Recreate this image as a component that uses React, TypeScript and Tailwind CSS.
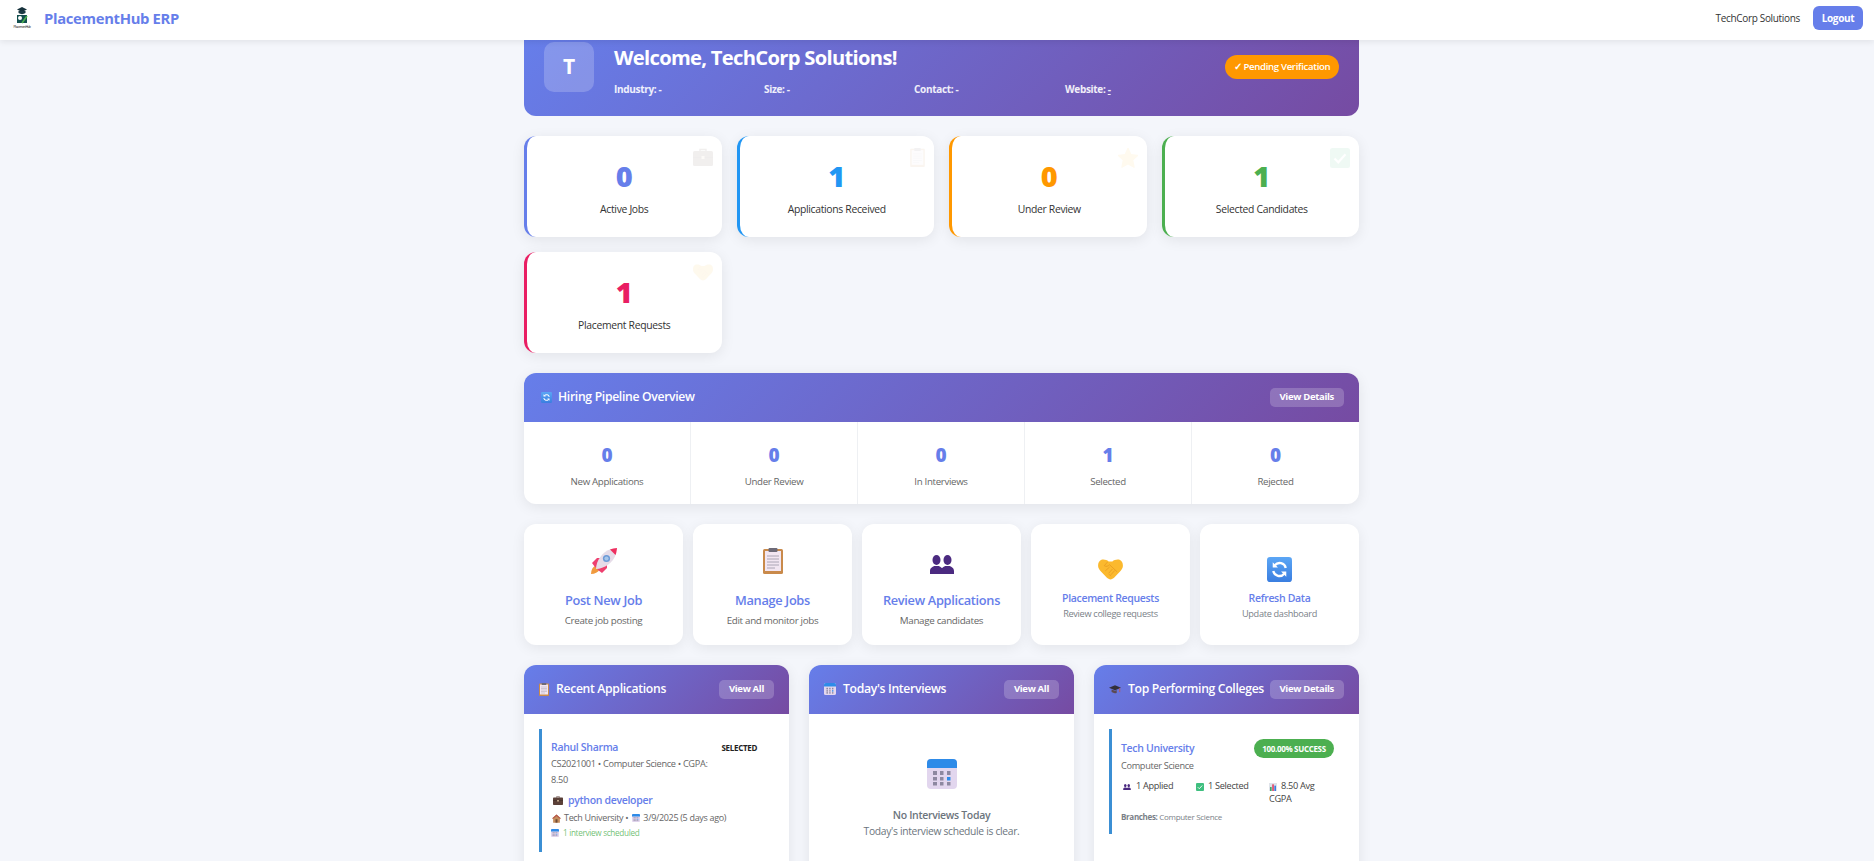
import React from "react";

const Briefcase = ({ className = "" }: { className?: string }) => (
  <svg viewBox="0 0 20 18" className={className}>
    <path d="M7 3V1.5h6V3" fill="none" stroke="#5b4038" strokeWidth="1.4" />
    <rect x="0" y="3" width="20" height="15" rx="1.5" fill="#5b4038" />
    <rect x="0" y="9" width="20" height="1" fill="#3d2a25" />
    <rect x="8.5" y="8" width="3" height="3" fill="#e5c9a8" />
  </svg>
);
const Clipboard = ({ className = "" }: { className?: string }) => (
  <svg viewBox="0 0 20 26" className={className}>
    <rect x="0" y="1" width="20" height="25" rx="1.5" fill="#c98a4b" />
    <rect x="2" y="3" width="16" height="20" fill="#f2e6f2" />
    <rect x="5.5" y="0" width="9" height="4" rx="1" fill="#6d6a78" />
    <path d="M4 8h12M4 11h12M4 14h12M4 17h12M4 20h8" stroke="#9a94a6" strokeWidth="0.8" />
  </svg>
);
const Star = ({ className = "" }: { className?: string }) => (
  <svg viewBox="0 0 20 20" className={className}>
    <path d="M10 0l3 6.6 7 .8-5.2 4.8 1.4 7.2L10 16l-6.2 3.4 1.4-7.2L0 7.4l7-.8z" fill="#ffc83d" stroke="#ffc83d" strokeWidth="1" strokeLinejoin="round" />
  </svg>
);
const CheckBox = ({ className = "" }: { className?: string }) => (
  <svg viewBox="0 0 20 20" className={className}>
    <rect width="20" height="20" rx="2.5" fill="#3fbf7f" />
    <path d="M4.5 10.5l3.8 3.8 7.2-8" fill="none" stroke="#fff" strokeWidth="2.2" />
  </svg>
);
const Handshake = ({ className = "" }: { className?: string }) => (
  <svg viewBox="0 0 26 22" className={className}>
    <path d="M3 1C1 2 0 4 0 7c0 2 1 4 3 6l6 6.500c2.500 2.500 5.500 2.500 8 0l6-6.500c2-2 3-4 3-6 0-3-1-5-3-6-3-1-6 0-8 1.500h-4C9 1 6 0 3 1z" fill="#fbb92e" />
    <path d="M10 3L6.500 7c2 1.500 4 .5 5.500-1l8 7.500M15 10.500l-4 4.500M17.500 12l-4 4.500M12 8.500l-4.500 4M13.500 18l-2-2" fill="none" stroke="#e6981f" strokeWidth="0.8" />
  </svg>
);
const Rocket = ({ className = "" }: { className?: string }) => (
  <svg viewBox="0 0 26 26" className={className}>
    <path d="M0 26c.2-4 1.500-7 4.500-8.500l4 4C7 24.500 4 25.800 0 26z" fill="#f09a3e" />
    <path d="M1 15l5-5 4.500 0L6.500 20.500 4 19z" fill="#ee3f6f" />
    <path d="M11 25l5-5 0-4.500L5.500 19.500 7 22z" fill="#ee3f6f" />
    <path d="M5 21C5 13 11.500 3.500 20 1l5 5C22.500 14.500 13 21 5 21z" fill="#e6dce8" />
    <path d="M19 1.500C21 .7 23.500 .2 26 0c-.2 2.500-.7 5-1.500 7z" fill="#ee2f5f" />
    <circle cx="15.500" cy="10.500" r="3.600" fill="#6c9ad6" />
    <circle cx="15.500" cy="10.500" r="2.100" fill="#a7c6ea" />
  </svg>
);
const People = ({ className = "" }: { className?: string }) => (
  <svg viewBox="0 0 24 19" className={className}>
    <g fill="#4b2a80">
      <ellipse cx="6.500" cy="5" rx="4" ry="5" />
      <path d="M0 19v-3c0-3 2.500-4 4-5h5c1.500 1 4 2 4 5v3z" />
      <ellipse cx="17.500" cy="5" rx="4" ry="5" />
      <path d="M11 19v-3c0-3 2.500-4 4-5h5c1.500 1 4 2 4 5v3z" />
    </g>
  </svg>
);
const Refresh = ({ className = "" }: { className?: string }) => (
  <svg viewBox="0 0 24 24" className={className}>
    <defs>
      <linearGradient id="rf" x1="0" y1="0" x2="0" y2="1">
        <stop offset="0" stopColor="#5ba6f5" />
        <stop offset="1" stopColor="#3a7ee0" />
      </linearGradient>
    </defs>
    <rect width="24" height="24" rx="3" fill="url(#rf)" />
    <path d="M18 10.500A6 6 0 0 0 7.500 8M6 13.500A6 6 0 0 0 16.500 16" fill="none" stroke="#fff" strokeWidth="2.200" />
    <path d="M5.500 5v5h5zM18.500 19v-5h-5z" fill="#fff" />
  </svg>
);
const Calendar = ({ className = "" }: { className?: string }) => (
  <svg viewBox="0 0 30 30" className={className}>
    <rect width="30" height="30" rx="4" fill="#e2d6ee" />
    <path d="M0 9V4a4 4 0 0 1 4-4h22a4 4 0 0 1 4 4v5z" fill="#2e8be8" />
    <g fill="#8d88a0">
      <rect x="6" y="12" width="4" height="4" />
      <rect x="13" y="12" width="3.500" height="4" />
      <rect x="20" y="12" width="3.500" height="4" />
      <rect x="6" y="18" width="4" height="3.500" />
      <rect x="13" y="18" width="3.500" height="3.500" />
      <rect x="6" y="23" width="4" height="3.500" />
      <rect x="13" y="23" width="3.500" height="3.500" />
      <rect x="20" y="23" width="3.500" height="3.500" />
    </g>
    <rect x="20" y="18" width="3.500" height="3.500" fill="#2e8be8" />
  </svg>
);
const GradCap = ({ className = "" }: { className?: string }) => (
  <svg viewBox="0 0 14 12" className={className}>
    <path d="M0 4l7-3 7 3-7 3z" fill="#33303a" />
    <path d="M3 6v3c2 1.500 4 1.500 6 1V6.500L7 7.500z" fill="#5c4a52" />
    <path d="M12.500 4.500V9" stroke="#c9553f" strokeWidth="1" />
  </svg>
);
const Chart = ({ className = "" }: { className?: string }) => (
  <svg viewBox="0 0 12 12" className={className}>
    <rect width="12" height="12" fill="#dfe3ea" />
    <rect x="1.500" y="6" width="2.500" height="6" fill="#3fa96a" />
    <rect x="4.800" y="2" width="2.500" height="10" fill="#e0476a" />
    <rect x="8" y="4" width="2.500" height="8" fill="#3a7ee0" />
  </svg>
);
const House = ({ className = "" }: { className?: string }) => (
  <svg viewBox="0 0 12 12" className={className}>
    <path d="M6 .5L0 6h1.500v5.500h9V6H12z" fill="#c58e5c" />
    <path d="M6 .5L0 6h2l4-3.500L10 6h2z" fill="#b5534a" />
    <rect x="4.700" y="7" width="2.600" height="4.500" fill="#6e4a36" />
  </svg>
);
const Logo = () => (
  <svg viewBox="0 0 24 22" className="w-6 h-[22px] shrink-0">
    <path d="M12 0l5 2.500-5 2.500-5-2.500z" fill="#16323c" />
    <path d="M8.500 4v2c2 1.500 5 1.500 7 0V4z" fill="#1c3a44" />
    <path d="M7 8h10v8H7z" fill="#14504f" />
    <circle cx="10" cy="11" r="2" fill="#fff" />
    <path d="M12 16l5-7" stroke="#4caf50" strokeWidth="1.600" />
    <text x="12" y="21" textAnchor="middle" fontSize="3.200" fontFamily="Liberation Sans" fill="#222">PlacementHub</text>
  </svg>
);

const StatCard = ({ n, label, numCls, borderCls, icon }: { n: string; label: string; numCls: string; borderCls: string; icon: React.ReactNode }) => (
  <div className={`relative h-[101px] rounded-[12px] border-l-[3px] bg-white flex flex-col items-center pt-[23px] shadow-[0_3px_14px_rgba(0,0,0,0.08)] ${borderCls}`}>
    <div className={`text-[29px] leading-[34px] font-black tracking-normal ${numCls}`}>{n}</div>
    <div className="mt-[9px] text-[10.4px] leading-[14px] text-[#333333]">{label}</div>
    <div className="absolute top-[12px] right-[9px] opacity-[0.08]">{icon}</div>
  </div>
);

const Pipe = ({ n, label, last }: { n: string; label: string; last?: boolean }) => (
  <div className={`flex flex-col items-center pt-[21px] ${last ? "" : "border-r border-[#eef0f3]"}`}>
    <div className="text-[19px] leading-[24px] font-black tracking-normal text-[#667eea]">{n}</div>
    <div className="mt-[8px] text-[9.7px] leading-[14px] text-[#666666]">{label}</div>
  </div>
);

const Action = ({ icon, title, sub, small }: { icon: React.ReactNode; title: string; sub: string; small?: boolean }) => (
  <div className={`h-[121px] rounded-[12px] bg-white flex flex-col items-center shadow-[0_3px_14px_rgba(0,0,0,0.07)] ${small ? "pt-[32px]" : "pt-[24px]"}`}>
    <div className={`h-[26px] flex items-center ${small ? "mb-[9px]" : "mb-[17px]"}`}>{icon}</div>
    {small ? (
      <>
        <div className="text-[10.5px] leading-[14px] font-semibold text-[#667eea]">{title}</div>
        <div className="mt-[2px] text-[9.2px] leading-[13px] text-[#7a7f88]">{sub}</div>
      </>
    ) : (
      <>
        <div className="text-[12.8px] leading-[18px] font-semibold text-[#667eea]">{title}</div>
        <div className="mt-[5px] text-[9.8px] leading-[14px] text-[#666666]">{sub}</div>
      </>
    )}
  </div>
);

const Btn = ({ children }: { children: React.ReactNode }) => (
  <div className="h-[19px] px-[10px] rounded-[5px] bg-white/20 text-[9.5px] font-bold text-white flex items-center whitespace-nowrap">{children}</div>
);

const PanelHead = ({ icon, title, btn }: { icon: React.ReactNode; title: string; btn: string }) => (
  <div className="h-[49px] rounded-t-[12px] px-[15px] flex items-center justify-between bg-[linear-gradient(135deg,#667eea_0%,#764ba2_100%)]">
    <div className="flex items-center gap-[7px] text-[12.2px] font-semibold text-white whitespace-nowrap">
      {icon}
      {title}
    </div>
    <Btn>{btn}</Btn>
  </div>
);

export default function App() {
  return (
    <div className="h-[861px] overflow-hidden bg-[#f4f6fb] tracking-[-0.02em] font-['Open_Sans','Noto_Sans',sans-serif]">
      <header className="relative z-10 h-10 bg-white flex items-center justify-between pl-[10px] pr-[11px] pb-[4px] shadow-[0_2px_6px_rgba(0,0,0,0.08)]">
        <div className="flex items-center gap-[10px]">
          <Logo />
          <div className="text-[14.8px] font-bold text-[#667eea] whitespace-nowrap">PlacementHub ERP</div>
        </div>
        <div className="flex items-center gap-[13px]">
          <div className="text-[10px] text-[#333333]">TechCorp Solutions</div>
          <div className="h-[24px] w-[50px] rounded-[6px] bg-[#667eea] text-white text-[10px] font-bold flex items-center justify-center">Logout</div>
        </div>
      </header>

      <main className="w-[835px] ml-[524px]">
        <section className="h-[76px] rounded-b-[12px] px-[20px] pt-[2px] flex items-start gap-[20px] bg-[linear-gradient(135deg,#667eea_0%,#764ba2_100%)]">
          <div className="w-[50px] h-[50px] rounded-[10px] bg-white/20 text-white text-[21px] font-bold flex items-center justify-center shrink-0">T</div>
          <div className="flex-1 min-w-0">
            <div className="text-[20.2px] leading-[28px] font-bold tracking-[-0.035em] text-white mt-[1px] whitespace-nowrap">Welcome, TechCorp Solutions!</div>
            <div className="grid grid-cols-[150px_150px_151px_150px] mt-[11px] text-[10px] leading-[14px] font-bold text-white/90">
              <div>Industry: -</div>
              <div>Size: -</div>
              <div>Contact: -</div>
              <div>Website: <span className="underline">-</span></div>
            </div>
          </div>
          <div className="mt-[13px] h-[24px] w-[114px] rounded-full bg-[#ff9800] text-white text-[9.6px] font-semibold flex items-center justify-center whitespace-nowrap">✓ Pending Verification</div>
        </section>

        <section className="grid grid-cols-4 gap-[15px] mt-[20px]">
          <StatCard n="0" label="Active Jobs" numCls="text-[#667eea]" borderCls="border-[#667eea]" icon={<Briefcase className="w-5 h-[18px]" />} />
          <StatCard n="1" label="Applications Received" numCls="text-[#2196f3]" borderCls="border-[#2196f3]" icon={<Clipboard className="w-[15px] h-[19px]" />} />
          <StatCard n="0" label="Under Review" numCls="text-[#ff9800]" borderCls="border-[#ff9800]" icon={<Star className="w-5 h-5" />} />
          <StatCard n="1" label="Selected Candidates" numCls="text-[#4caf50]" borderCls="border-[#4caf50]" icon={<CheckBox className="w-5 h-5" />} />
          <StatCard n="1" label="Placement Requests" numCls="text-[#e91e63]" borderCls="border-[#e91e63]" icon={<Handshake className="w-5 h-[17px]" />} />
        </section>

        <section className="mt-[20px] rounded-[12px] bg-white shadow-[0_3px_14px_rgba(0,0,0,0.08)]">
          <div className="h-[49px] rounded-t-[12px] pl-[17px] pr-[15px] flex items-center justify-between bg-[linear-gradient(135deg,#667eea_0%,#764ba2_100%)]">
            <div className="flex items-center gap-[6px] text-[12.2px] font-semibold text-white">
              <Refresh className="w-[11px] h-[11px]" />
              Hiring Pipeline Overview
            </div>
            <Btn>View Details</Btn>
          </div>
          <div className="grid grid-cols-5 h-[82px]">
            <Pipe n="0" label="New Applications" />
            <Pipe n="0" label="Under Review" />
            <Pipe n="0" label="In Interviews" />
            <Pipe n="1" label="Selected" />
            <Pipe n="0" label="Rejected" last />
          </div>
        </section>

        <section className="grid grid-cols-5 gap-[10px] mt-[20px]">
          <Action icon={<Rocket className="w-[26px] h-[26px]" />} title="Post New Job" sub="Create job posting" />
          <Action icon={<Clipboard className="w-[20px] h-[26px]" />} title="Manage Jobs" sub="Edit and monitor jobs" />
          <Action icon={<People className="w-[24px] h-[19px] self-end" />} title="Review Applications" sub="Manage candidates" />
          <Action small icon={<Handshake className="w-[25px] h-[21px]" />} title="Placement Requests" sub="Review college requests" />
          <Action small icon={<Refresh className="w-[25px] h-[25px]" />} title="Refresh Data" sub="Update dashboard" />
        </section>

        <section className="grid grid-cols-3 gap-[20px] mt-[20px]">
          <div className="h-[300px] rounded-[12px] bg-white shadow-[0_3px_14px_rgba(0,0,0,0.08)]">
            <PanelHead icon={<Clipboard className="w-[10px] h-[13px]" />} title="Recent Applications" btn="View All" />
            <div className="ml-[15px] mt-[15px] mr-[15px] h-[123px] border-l-[3px] border-[#3b8fd4] pl-[9px] pt-[11px]">
              <div className="flex justify-between pr-[17px]">
                <div className="text-[10.5px] leading-[15px] font-semibold text-[#667eea]">Rahul Sharma</div>
                <div className="text-[8px] leading-[15px] font-bold text-[#222222]">SELECTED</div>
              </div>
              <div className="mt-[1px] w-[165px] text-[9.2px] leading-[16px] text-[#666666]">CS2021001 • Computer Science • CGPA: 8.50</div>
              <div className="mt-[5px] ml-[2px] flex items-center gap-[5px] text-[10.5px] leading-[15px] font-semibold text-[#667eea]">
                <Briefcase className="w-[10px] h-[9px]" />
                python developer
              </div>
              <div className="mt-[3px] flex items-center gap-[3px] text-[9px] leading-[14px] text-[#666666] whitespace-nowrap">
                <House className="w-[9px] h-[9px] ml-[1px]" />
                Tech University •
                <Calendar className="w-[8px] h-[8px] ml-[1px]" />
                3/9/2025 (5 days ago)
              </div>
              <div className="mt-[1px] flex items-center gap-[4px] text-[8.2px] leading-[14px] text-[#4caf50]/80">
                <Calendar className="w-[8px] h-[8px]" />
                1 interview scheduled
              </div>
            </div>
          </div>

          <div className="h-[300px] rounded-[12px] bg-white shadow-[0_3px_14px_rgba(0,0,0,0.08)]">
            <PanelHead icon={<Calendar className="w-[12px] h-[12px]" />} title="Today's Interviews" btn="View All" />
            <div className="flex flex-col items-center pt-[45px]">
              <Calendar className="w-[30px] h-[30px]" />
              <div className="mt-[19px] text-[10.5px] leading-[15px] font-semibold text-[#6c757d]">No Interviews Today</div>
              <div className="mt-[1px] text-[10.3px] leading-[15px] text-[#6c757d]">Today's interview schedule is clear.</div>
            </div>
          </div>

          <div className="h-[300px] rounded-[12px] bg-white shadow-[0_3px_14px_rgba(0,0,0,0.08)]">
            <PanelHead icon={<GradCap className="w-[12px] h-[11px]" />} title="Top Performing Colleges" btn="View Details" />
            <div className="ml-[15px] mt-[15px] mr-[15px] h-[105px] border-l-[3px] border-[#3b8fd4] pl-[9px] pt-[10px]">
              <div className="flex items-center justify-between pr-[10px]">
                <div className="text-[10.5px] leading-[15px] font-semibold text-[#667eea]">Tech University</div>
                <div className="h-[19px] w-[80px] rounded-full bg-[#4caf50] text-white text-[8px] font-bold flex items-center justify-center whitespace-nowrap">100.00% SUCCESS</div>
              </div>
              <div className="mt-[1px] text-[9.2px] leading-[14px] text-[#666666]">Computer Science</div>
              <div className="mt-[6px] grid grid-cols-[75px_73px_56px] text-[9.2px] leading-[13px] text-[#444444]">
                <div className="pl-[2px]"><People className="inline w-[8px] h-[6px] mr-[5px]" />1 Applied</div>
                <div><CheckBox className="inline w-[8px] h-[8px] mr-[4px]" />1 Selected</div>
                <div><Chart className="inline w-[8px] h-[8px] mr-[4px]" />8.50 Avg CGPA</div>
              </div>
              <div className="mt-[5px] text-[8px] leading-[13px] text-[#7a7f88]"><span className="font-bold">Branches:</span> Computer Science</div>
            </div>
          </div>
        </section>
      </main>
    </div>
  );
}
